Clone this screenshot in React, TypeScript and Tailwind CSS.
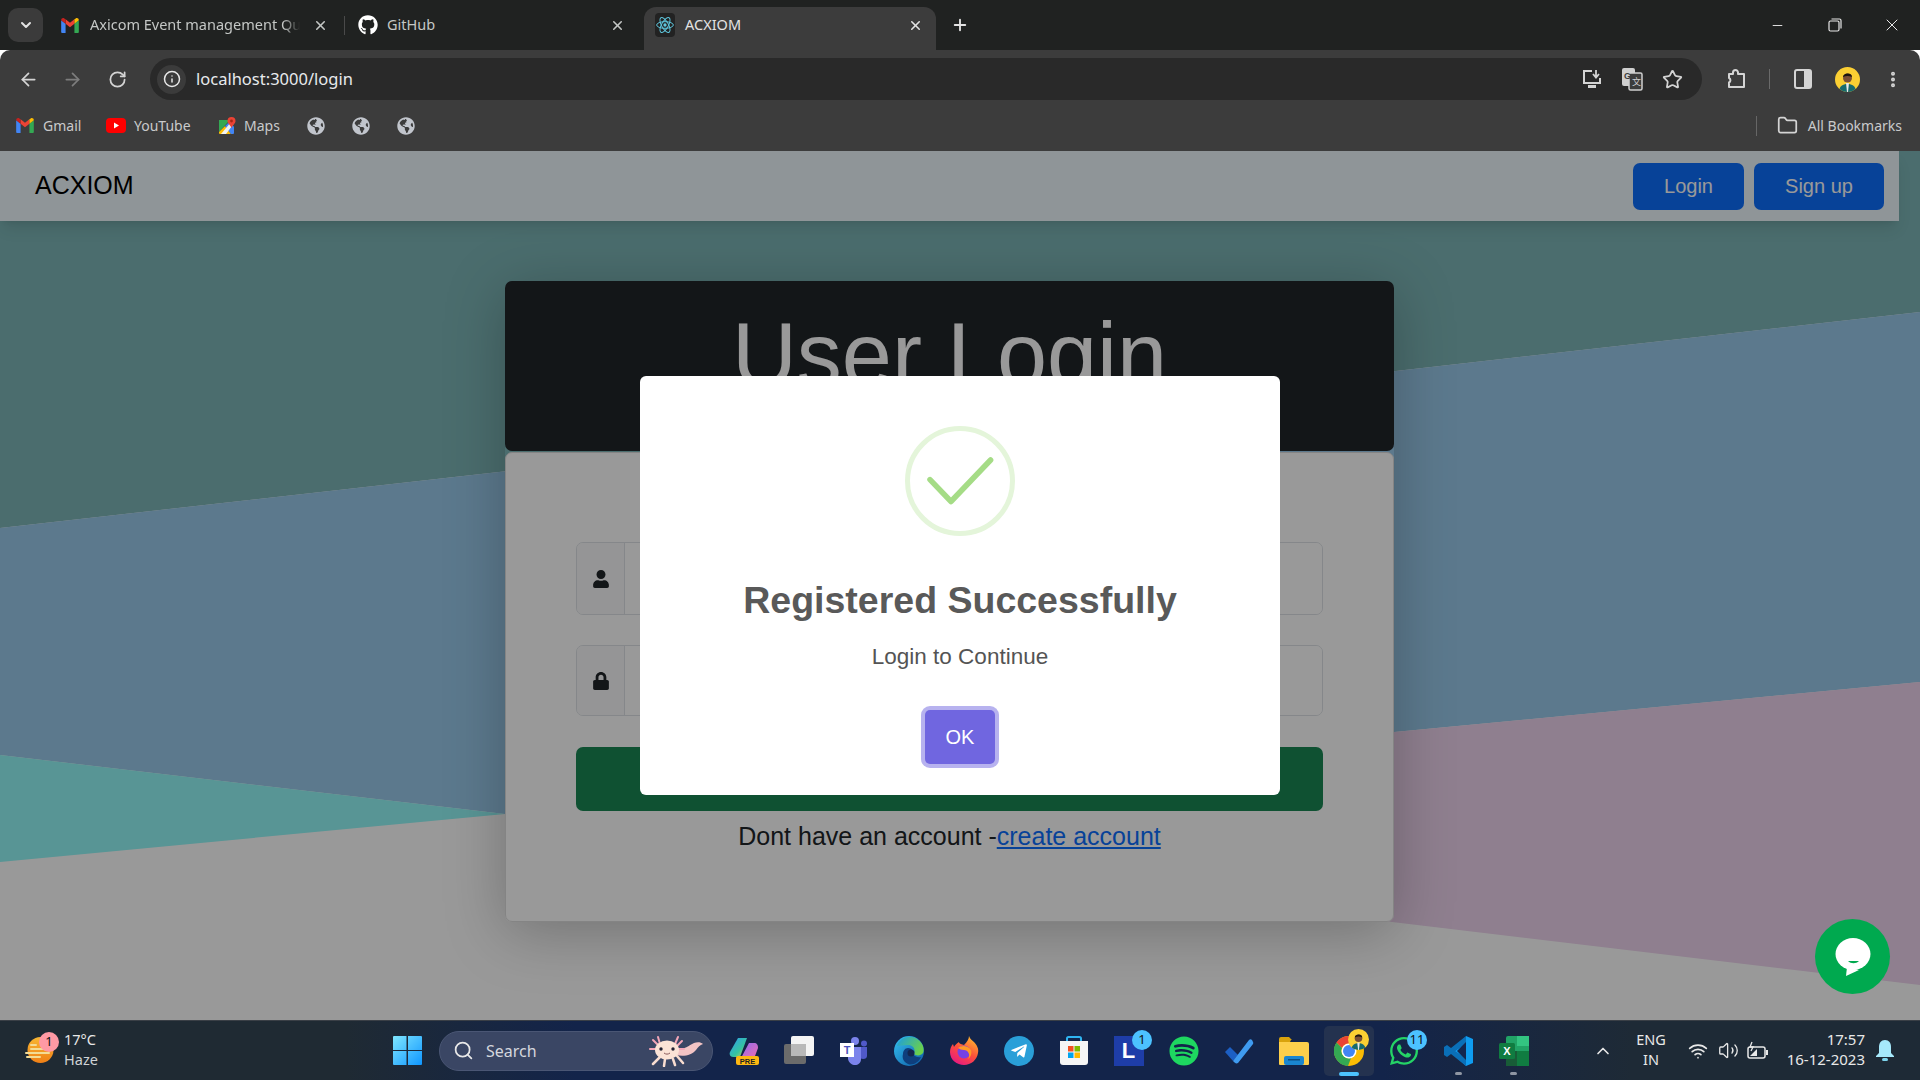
import type { ReactNode } from "react";
import {
  ArrowLeft,
  ArrowRight,
  ChevronDown,
  ChevronUp,
  EllipsisVertical,
  Folder,
  Info,
  Minus,
  Plus,
  RotateCw,
  Search,
  Star,
  Volume2,
  Wifi,
  X,
} from "lucide-react";
import {
  FaGithub,
  FaGlobeAmericas,
  FaLock,
  FaSpotify,
  FaTelegramPlane,
  FaUser,
  FaWhatsapp,
} from "react-icons/fa";

function GmailIcon() {
  return (
    <svg width={18} height={15} viewBox="2 3.500 20 17">
      <path d="M2 20V6l5 4v10.500H3a1 1 0 0 1-1-1z" fill="#4285f4" />
      <path d="M22 20V6l-5 4v10.500h4a1 1 0 0 0 1-1z" fill="#34a853" />
      <path d="M7 10v-5l5 4 5-4v5l-5 4z" fill="#ea4335" />
      <path d="M2 6c0-2 2-3 3.500-2L7 5v5L2 6z" fill="#c5221f" />
      <path d="M22 6c0-2-2-3-3.500-2L17 5v5l5-4z" fill="#fbbc04" />
    </svg>
  );
}

function ReactIcon() {
  return (
    <svg width={20} height={24} viewBox="0 0 24 24" className="bg-[#222] rounded-sm" fill="none" stroke="#5ec6dd" strokeWidth={1.2}>
      <circle cx={12} cy={12} r={2} fill="#5ec6dd" stroke="none" />
      <ellipse cx={12} cy={12} rx={10} ry={4} />
      <ellipse cx={12} cy={12} rx={10} ry={4} transform="rotate(60 12 12)" />
      <ellipse cx={12} cy={12} rx={10} ry={4} transform="rotate(120 12 12)" />
    </svg>
  );
}

function YoutubeIcon() {
  return (
    <svg width={20} height={15} viewBox="0 0 20 15">
      <rect width={20} height={15} rx={4} fill="#f00" />
      <path d="M8 4.500v6l5-3z" fill="#fff" />
    </svg>
  );
}

function MapsIcon() {
  return (
    <svg width={18} height={18} viewBox="0 0 18 18">
      <path d="M1 3h11L1 15z" fill="#34a853" />
      <path d="M1 15 7 9l6 8H2a1 1 0 0 1-1-1z" fill="#fbbc04" />
      <path d="M7 9l5-5 4 6v6a1 1 0 0 1-1 1h-2z" fill="#4285f4" />
      <path d="M3 17 13 5l4 0-9 12z" fill="#f1f3f4" />
      <path d="M13.500 0a4 4 0 0 1 4 4c0 2.500-3 4-4 7-1-3-4-4.500-4-7a4 4 0 0 1 4-4z" fill="#ea4335" />
      <circle cx={13.500} cy={4} r={1.400} fill="#a52714" />
    </svg>
  );
}

function InstallIcon() {
  return (
    <svg width={22} height={22} viewBox="0 0 22 22" fill="none" stroke="#d4d4d4" strokeWidth={2}>
      <path d="M11 3H3v12h16v-5" />
      <path d="M15 2v7m-3-3 3 3.500L18 6" strokeWidth={1.800} />
      <path d="M7 18.500h8" strokeWidth={3} />
    </svg>
  );
}

function TranslateIcon() {
  return (
    <svg width={22} height={24} viewBox="0 0 22 24">
      <rect x={1} y={1} width={13} height={18} rx={2} fill="#cfcfcf" />
      <rect x={8} y={6} width={13} height={17} rx={1.500} fill="#3c3c3c" stroke="#cfcfcf" strokeWidth={1.500} />
      <text x={3} y={12} fontSize={9} fontWeight={700} fill="#3c3c3c" fontFamily="Liberation Sans, sans-serif">G</text>
      <text x={11} y={18} fontSize={9} fill="#cfcfcf" fontFamily="Noto Sans CJK SC, sans-serif">文</text>
    </svg>
  );
}

function ExtensionIcon() {
  return (
    <svg width={22} height={22} viewBox="0 0 22 22" fill="none" stroke="#d4d4d4" strokeWidth={2} strokeLinejoin="round">
      <path d="M4 6h4V4.500a2.500 2.500 0 0 1 5 0V6h6v13H4v-4.500a2.500 2.500 0 0 0 0-4.500z" />
    </svg>
  );
}

function SidePanelIcon() {
  return (
    <svg width={18} height={20} viewBox="0 0 18 20">
      <rect x={1} y={1} width={16} height={18} rx={2} fill="none" stroke="#d4d4d4" strokeWidth={2} />
      <rect x={10} y={1} width={7} height={18} fill="#d4d4d4" />
    </svg>
  );
}

function RestoreIcon() {
  return (
    <svg width={14} height={14} viewBox="0 0 14 14" fill="none" stroke="#e8e8e8" strokeWidth={1.200}>
      <rect x={1} y={3} width={10} height={10} rx={1.500} />
      <path d="M3.500 1H11.500a1.500 1.500 0 0 1 1.500 1.500V10.500" />
    </svg>
  );
}

function Avatar({ size }: { size: number }) {
  return (
    <svg width={size} height={size} viewBox="0 0 25 25" className="rounded-full">
      <rect width={25} height={25} fill="#fbcf33" />
      <path d="M4 25c0-6 4-8 8.500-8S21 19 21 25z" fill="#176a6d" />
      <path d="M11 16h3l-1 9h-1z" fill="#e8e8e8" />
      <circle cx={12.500} cy={11} r={4.500} fill="#7a4f35" />
      <path d="M8 10c0-4 9-5 9 0-3-1.500-6-1.500-9 0z" fill="#1d1510" />
    </svg>
  );
}

function WeatherIcon() {
  return (
    <svg width={30} height={30} viewBox="0 0 30 30">
      <defs>
        <linearGradient id="sun" x1="0" y1="0" x2="0" y2="1">
          <stop offset="0" stopColor="#f7b733" />
          <stop offset="1" stopColor="#ef7f16" />
        </linearGradient>
      </defs>
      <circle cx={15.500} cy={14} r={13} fill="url(#sun)" />
      <g stroke="#f3dc96" strokeWidth={2} strokeLinecap="round">
        <path d="M6 9h5M6 13h17M1 17h23M2 21h13" />
      </g>
    </svg>
  );
}

function WindowsIcon() {
  return (
    <svg width={29} height={29} viewBox="0 0 29 29">
      <defs>
        <linearGradient id="win" x1="0" y1="0" x2="1" y2="1">
          <stop offset="0" stopColor="#7fe6ff" />
          <stop offset="1" stopColor="#0f96ff" />
        </linearGradient>
      </defs>
      <path d="M0 1a1 1 0 0 1 1-1h12.500v14H0zM15 0h13a1 1 0 0 1 1 1v13H15zM0 15h13.500v14H1a1 1 0 0 1-1-1zM15 15h14v13a1 1 0 0 1-1 1H15z" fill="url(#win)" />
    </svg>
  );
}

function Axolotl() {
  return (
    <svg width={56} height={32} viewBox="0 0 56 32">
      <path d="M28 14c6 2 12-3 18-6 3-1 7-1 9 1-3 1-5 3-7 6-4 5-12 7-20 5z" fill="#f2c4c4" />
      <g stroke="#f3a6b8" strokeWidth={2} strokeLinecap="round">
        <path d="M10 10 5 5M12 9l-2-7M27 9l3-7M29 11l5-5M9 14H2M30 14h6" />
      </g>
      <g stroke="#f9ddd0" strokeWidth={2.500} strokeLinecap="round">
        <path d="M12 22 5 29M17 24l-1 7M25 24l2 6M29 21l6 7" />
      </g>
      <ellipse cx={19} cy={15} rx={12} ry={9.500} fill="#fbe3d6" />
      <circle cx={13} cy={14} r={1.700} fill="#223" />
      <circle cx={25} cy={14} r={1.700} fill="#223" />
      <path d="M16 18c2 1.500 4 1.500 6 0" stroke="#8a5a5a" strokeWidth={1} fill="none" />
    </svg>
  );
}

function CopilotIcon() {
  return (
    <svg width={30} height={30} viewBox="0 0 30 30">
      <defs>
        <linearGradient id="cp1" x1="0" y1="0" x2="1" y2="1">
          <stop offset="0" stopColor="#2f9cf4" />
          <stop offset="0.6" stopColor="#35c4a0" />
          <stop offset="1" stopColor="#e8c93a" />
        </linearGradient>
        <linearGradient id="cp2" x1="0" y1="0" x2="1" y2="1">
          <stop offset="0" stopColor="#8b6cf0" />
          <stop offset="1" stopColor="#f06bb0" />
        </linearGradient>
      </defs>
      <path d="M9 2h9l-7 19H4c-3 0-4-3-3-5z" fill="url(#cp1)" />
      <path d="M20 7h5c3 0 4 2 4 5l-3 8c-1 2-3 2-5 2h-9z" fill="url(#cp2)" />
      <rect x={7} y={20} width={23} height={9} rx={2} fill="#fdb812" />
      <text x={18.500} y={27.500} textAnchor="middle" fontSize={7.500} fontWeight={700} fill="#222" fontFamily="Liberation Sans, sans-serif">PRE</text>
    </svg>
  );
}

function TaskViewIcon() {
  return (
    <svg width={30} height={30} viewBox="0 0 30 30">
      <rect x={0} y={8} width={22} height={20} rx={2} fill="#6b6b6b" />
      <rect x={7} y={0} width={23} height={20} rx={2} fill="#f4f4f4" />
      <rect x={7} y={8} width={15} height={12} fill="#b9b9b9" />
    </svg>
  );
}

function TeamsIcon() {
  return (
    <svg width={28} height={28} viewBox="0 0 28 28">
      <circle cx={15} cy={4} r={4} fill="#7b83eb" />
      <circle cx={24} cy={6.500} r={3} fill="#5059c9" />
      <path d="M19 10h8v9c0 3-4 4-7 2z" fill="#5059c9" />
      <path d="M8 10h13v12c0 4-3 6-6 6s-6-2-7-6z" fill="#7b83eb" />
      <rect x={0} y={6} width={14} height={14} fill="#fff" />
      <text x={7} y={17} textAnchor="middle" fontSize={11} fontWeight={700} fill="#4b53bc" fontFamily="Liberation Sans, sans-serif">T</text>
    </svg>
  );
}

function EdgeIcon() {
  return (
    <svg width={30} height={30} viewBox="0 0 30 30">
      <defs>
        <linearGradient id="edge1" x1="0" y1="0" x2="1" y2="1">
          <stop offset="0" stopColor="#35c1f1" />
          <stop offset="1" stopColor="#0c59a4" />
        </linearGradient>
        <linearGradient id="edge2" x1="0" y1="0" x2="1" y2="0.500">
          <stop offset="0" stopColor="#1b9de2" />
          <stop offset="1" stopColor="#6ad04c" />
        </linearGradient>
      </defs>
      <circle cx={15} cy={15} r={15} fill="url(#edge1)" />
      <path d="M3 10C6 1 16-1 23 3c5 3 8 9 6 14-2 3-7 3-9 1 2-5-1-9-6-9-5 0-8 1-11 1z" fill="url(#edge2)" />
      <path d="M14 12c4 0 5 3 5 5s3 5 8 4c-2 5-8 9-13 7-5-2-6-7-5-10 0-3 2-6 5-6z" fill="#0f3f7d" />
      <circle cx={17} cy={17} r={3.500} fill="#13264f" />
    </svg>
  );
}

function FirefoxIcon() {
  return (
    <svg width={30} height={30} viewBox="0 0 30 30">
      <defs>
        <linearGradient id="ff" x1="0.800" y1="0" x2="0.200" y2="1">
          <stop offset="0" stopColor="#ffbd2e" />
          <stop offset="0.500" stopColor="#ff4f3a" />
          <stop offset="1" stopColor="#e31587" />
        </linearGradient>
      </defs>
      <path d="M20 0c1 3 3 4 5 6 3 3 5 7 4 11-1 7-7 12-14 12S1 24 1 16c0-3 1-6 3-8l1 3c1-2 3-4 5-5 0 2 3 2 5 3 3-3 5-6 5-9z" fill="url(#ff)" />
      <circle cx={15} cy={16} r={6.500} fill="#7542e5" />
      <path d="M9 12c3-3 10-3 13 2 1 3 0 7-3 9 3-4 0-9-4-9-3 0-4-1-6-2z" fill="#ff9a25" />
    </svg>
  );
}

function StoreIcon() {
  return (
    <svg width={30} height={30} viewBox="0 0 30 30">
      <path d="M8 5V2.500A1.500 1.500 0 0 1 9.500 1h11A1.500 1.500 0 0 1 22 2.500V5" stroke="#2fb4f1" strokeWidth={2} fill="none" />
      <path d="M1 5h28v21a3 3 0 0 1-3 3H4a3 3 0 0 1-3-3z" fill="#f5f5f5" />
      <rect x={9} y={10} width={5.500} height={5.500} fill="#f25022" />
      <rect x={15.500} y={10} width={5.500} height={5.500} fill="#7fba00" />
      <rect x={9} y={16.500} width={5.500} height={5.500} fill="#00a4ef" />
      <rect x={15.500} y={16.500} width={5.500} height={5.500} fill="#ffb900" />
    </svg>
  );
}

function TodoIcon() {
  return (
    <svg width={30} height={26} viewBox="0 0 30 26">
      <path d="M1 14l5-5 8 8-5 6z" fill="#1c5fc4" />
      <path d="M9 23 25 2a2 2 0 0 1 3 0l1 2a2 2 0 0 1 0 2L14 25c-2 1-3 0-5-2z" fill="#3f9bf0" />
    </svg>
  );
}

function FilesIcon() {
  return (
    <svg width={30} height={28} viewBox="0 0 30 28">
      <path d="M0 2a2 2 0 0 1 2-2h8l3 3h-1l-1 2H0z" fill="#d9a30d" />
      <path d="M0 5h28a2 2 0 0 1 2 2v20a1 1 0 0 1-1 1H1a1 1 0 0 1-1-1z" fill="#fdcf4b" />
      <rect x={5} y={19} width={20} height={9} rx={2} fill="#1a86d0" />
      <rect x={9} y={22} width={12} height={1.500} fill="#0c4f82" />
    </svg>
  );
}

function ChromeIcon() {
  return (
    <svg width={30} height={30} viewBox="0 0 30 30">
      <circle cx={15} cy={15} r={15} fill="#fbbc04" />
      <path d="M15 0a15 15 0 0 1 13 7.500H15a7.500 7.500 0 0 0-7 4.500L2.500 6.500A15 15 0 0 1 15 0z" fill="#ea4335" />
      <path d="M2.500 6.500 8 12a7.500 7.500 0 0 0 9 10l-3 8A15 15 0 0 1 2.500 6.500z" fill="#34a853" />
      <circle cx={15} cy={15} r={7.500} fill="#fff" />
      <circle cx={15} cy={15} r={6} fill="#4285f4" />
    </svg>
  );
}

function VsCodeIcon() {
  return (
    <svg width={30} height={30} viewBox="0 0 30 30">
      <path d="M22 0 29 3v24l-7 3-14-13 14-11z" fill="#0f9cf0" />
      <path d="M22 0v8L11 15l11 7v8L7 18l-4 3-3-2v-8l3-2 4 3z" fill="#0a6fb8" />
      <path d="M22 6v18l-9-9z" fill="#13264f" />
    </svg>
  );
}

function ExcelIcon() {
  return (
    <svg width={30} height={30} viewBox="0 0 30 30">
      <rect x={7} y={0} width={23} height={30} rx={2} fill="#21a366" />
      <rect x={18} y={0} width={12} height={10} fill="#33c481" />
      <rect x={7} y={15} width={11} height={15} fill="#185c37" />
      <rect x={18} y={15} width={12} height={15} fill="#107c41" />
      <rect x={0} y={7} width={16} height={16} rx={1.500} fill="#107c41" />
      <text x={8} y={19} textAnchor="middle" fontSize={11} fontWeight={700} fill="#fff" fontFamily="Liberation Sans, sans-serif">X</text>
    </svg>
  );
}

function TabStrip() {
  return (
    <div className="flex h-[50px] bg-[#202221] text-[14.500px] font-['Noto_Sans',sans-serif]">
      <div className="ml-2 mt-2 w-[35px] h-[34px] rounded-[10px] bg-[#3b3b3b] flex items-center justify-center text-[#e3e3e3]">
        <ChevronDown size={16} strokeWidth={3} />
      </div>
      <div className="w-[7px]" />
      <div className="w-[294px] flex items-center pl-[11px] pr-4 text-[#c4c7c5]">
        <GmailIcon />
        <span className="ml-[11px] w-[210px] overflow-hidden whitespace-nowrap [mask-image:linear-gradient(90deg,#000_92%,transparent)]">Axicom Event management Que</span>
        <X size={15} strokeWidth={2.500} className="ml-auto" />
      </div>
      <div className="w-px h-[19px] mt-4 bg-[#4a4a4a]" />
      <div className="w-[299px] flex items-center pl-[13px] pr-[19px] text-[#c4c7c5]">
        <FaGithub size={20} className="text-white" />
        <span className="ml-[9px]">GitHub</span>
        <X size={15} strokeWidth={2.500} className="ml-auto" />
      </div>
      <div className="w-[292px] h-[43px] self-end rounded-t-[12px] bg-[#3c3c3c] flex items-center pl-[11px] pr-[13px] pb-[7px] text-[#e3e3e3]">
        <ReactIcon />
        <span className="ml-[10px]">ACXIOM</span>
        <X size={15} strokeWidth={2.500} className="ml-auto" />
      </div>
      <div className="ml-[14px] w-5 flex items-center justify-center text-[#e3e3e3]">
        <Plus size={18} strokeWidth={2.500} />
      </div>
      <div className="ml-auto flex items-center text-[#e8e8e8]">
        <div className="w-[57px] flex justify-center">
          <Minus size={15} strokeWidth={1.500} />
        </div>
        <div className="w-[57px] flex justify-center">
          <RestoreIcon />
        </div>
        <div className="w-[57px] flex justify-center">
          <X size={20} strokeWidth={1.200} />
        </div>
      </div>
    </div>
  );
}

function Toolbar() {
  return (
    <div className="flex items-end h-[50px] rounded-t-[10px] bg-[#3c3c3c] text-[#d4d4d4] pl-[6px]">
      <div className="w-[44px] h-[42px] flex items-center justify-center">
        <ArrowLeft size={21} strokeWidth={2} />
      </div>
      <div className="w-[45px] h-[42px] flex items-center justify-center text-[#7d7d7d]">
        <ArrowRight size={21} strokeWidth={2} />
      </div>
      <div className="w-[44px] h-[42px] flex items-center justify-center">
        <RotateCw size={19} strokeWidth={2.200} />
      </div>
      <div className="ml-[11px] w-[1552px] h-[42px] rounded-full bg-[#292929] flex items-center pl-[7px] pr-[10px]">
        <div className="w-[29px] h-[29px] rounded-full bg-[#3b3b3b] flex items-center justify-center text-[#e8e8e8]">
          <Info size={18} strokeWidth={2} />
        </div>
        <span className="ml-[10px] text-[16.500px] text-[#e8eaed] font-['Noto_Sans',sans-serif]">localhost:3000/login</span>
        <div className="ml-auto w-10 flex justify-center">
          <InstallIcon />
        </div>
        <div className="w-10 flex justify-center">
          <TranslateIcon />
        </div>
        <div className="w-10 flex justify-center">
          <Star size={21} strokeWidth={2} />
        </div>
      </div>
      <div className="w-[67px] h-[42px] flex items-center justify-center">
        <ExtensionIcon />
      </div>
      <div className="w-px h-5 mb-[11px] bg-[#6a6a6a]" />
      <div className="w-[65px] h-[42px] flex items-center justify-center">
        <SidePanelIcon />
      </div>
      <div className="w-[25px] h-[42px] flex items-center">
        <Avatar size={25} />
      </div>
      <div className="ml-[23px] w-5 h-[42px] flex items-center justify-center">
        <EllipsisVertical size={23} strokeWidth={2.800} />
      </div>
    </div>
  );
}

function Globe() {
  return (
    <div className="w-[45px] flex justify-center">
      <FaGlobeAmericas size={18} className="text-[#c1c5cc]" />
    </div>
  );
}

function Bookmarks() {
  return (
    <div className="flex items-center h-[51px] bg-[#3c3c3c] pl-4 pr-[18px] text-[14px] text-[#c9cacb] font-['Noto_Sans',sans-serif]">
      <div className="w-[90px] flex items-center gap-[9px]">
        <GmailIcon />
        <span>Gmail</span>
      </div>
      <div className="w-[112px] flex items-center gap-2">
        <YoutubeIcon />
        <span>YouTube</span>
      </div>
      <div className="w-[75px] flex items-center gap-2">
        <MapsIcon />
        <span>Maps</span>
      </div>
      <Globe />
      <Globe />
      <Globe />
      <div className="ml-auto w-px h-5 bg-[#666]" />
      <Folder size={21} strokeWidth={2} className="ml-5 text-[#d4d4d4]" />
      <span className="ml-[10px]">All Bookmarks</span>
    </div>
  );
}

function NavBar() {
  return (
    <nav className="relative w-[1899px] h-[70px] bg-[#eef8fd] shadow-lg flex items-center pl-[35px] pr-[15px] text-[25px] text-black">
      <span>ACXIOM</span>
      <button className="ml-auto w-[111px] h-[47px] rounded-[7px] bg-[#0d6efd] text-white text-[20px]">Login</button>
      <button className="ml-[10px] w-[130px] h-[47px] rounded-[7px] bg-[#0d6efd] text-white text-[20px]">Sign up</button>
    </nav>
  );
}

function Background() {
  return (
    <svg className="absolute inset-0 w-full h-full" viewBox="0 0 1920 869" preserveAspectRatio="none">
      <rect width={1920} height={869} fill="#fff" />
      <polygon points="0,0 1920,0 1920,161 0,377" fill="#7db6b7" />
      <polygon points="0,377 1920,161 1920,531 1394,581 505,663 0,604" fill="#99caeb" />
      <polygon points="0,604 505,663 0,711" fill="#93f8f8" />
      <polygon points="1920,531 1300,590 1300,760 1920,834" fill="#eed4ee" />
    </svg>
  );
}

function InputRow({ icon, height }: { icon: ReactNode; height: string }) {
  return (
    <div className={`flex rounded-[7px] border border-[#dee2e6] overflow-hidden ${height}`}>
      <div className="w-[48px] shrink-0 bg-[#f8f9fa] border-r border-[#dee2e6] flex items-center justify-center text-[#212529]">
        {icon}
      </div>
      <input className="flex-1 bg-white" />
    </div>
  );
}

function LoginCard() {
  return (
    <div className="relative w-[889px] ml-[505px] mt-[60px] shadow-[0_10px_60px_rgba(0,0,0,0.25)] rounded-[7px]">
      <div className="h-[170px] rounded-[7px] bg-[#212529] pt-5 text-center text-white text-[90px] leading-[1.2] overflow-hidden">
        User Login
      </div>
      <div className="mt-px h-[470px] rounded-[7px] border border-[#dddddd] bg-white px-[70px] pt-[89px]">
        <InputRow height="h-[73px]" icon={<FaUser size={18} />} />
        <div className="h-[30px]" />
        <InputRow height="h-[71px]" icon={<FaLock size={18} />} />
        <button className="block mt-[31px] w-full h-[64px] rounded-[7px] bg-[#198754]" />
        <p className="mt-[7px] text-center text-[25px] leading-[37px] text-[#212529]">
          Dont have an account -<a className="text-[#0d6efd] underline">create account</a>
        </p>
      </div>
    </div>
  );
}

function SuccessModal() {
  return (
    <div className="absolute inset-0 bg-black/40 flex items-center justify-center">
      <div className="w-[640px] h-[419px] rounded-[6px] bg-white flex flex-col items-center pt-[50px]">
        <svg width={110} height={110} viewBox="0 0 110 110" fill="none">
          <circle cx={55} cy={55} r={52.500} stroke="#e4f5da" strokeWidth={5} />
          <path d="M25 53.600 46 75.500 85.600 34" stroke="#a5dc86" strokeWidth={5.500} strokeLinecap="round" strokeLinejoin="round" />
        </svg>
        <h2 className="mt-[42px] text-[37.500px] leading-[45px] font-bold text-[#595959]">Registered Successfully</h2>
        <p className="mt-[20px] text-[22.500px] leading-[27px] text-[#545454]">Login to Continue</p>
        <button className="mt-[40px] w-[70px] h-[54px] rounded-[5px] bg-[#7066e0] text-white text-[20px] ring-4 ring-[#7066e0]/50">OK</button>
      </div>
    </div>
  );
}

function ChatButton() {
  return (
    <div className="absolute right-[30px] bottom-[26px] w-[75px] h-[75px] rounded-full bg-[#00a94f] flex items-center justify-center">
      <svg width={36} height={40} viewBox="0 0 36 40">
        <ellipse cx={18} cy={17} rx={17.500} ry={16} fill="#fff" />
        <path d="M12 30 11 39 24 33z" fill="#fff" />
        <path d="M13 24c3 3 8 3 11 0z" fill="#00a94f" />
      </svg>
    </div>
  );
}

function Slot({ children, badge, dot }: { children: ReactNode; badge?: string; dot?: boolean }) {
  return (
    <div className="relative w-[55px] h-full flex items-center justify-center">
      {children}
      {badge && (
        <span className="absolute top-[9px] left-[31px] w-5 h-5 rounded-full bg-[#4cc2ff] text-[#111] text-[13px] flex items-center justify-center">
          {badge}
        </span>
      )}
      {dot && <span className="absolute bottom-[5px] left-[24px] w-[7px] h-[3px] rounded-full bg-[#8f96a3]" />}
    </div>
  );
}

function Taskbar() {
  return (
    <footer className="flex items-center h-[60px] border-t border-[#3a3f46] bg-[linear-gradient(90deg,#1f2a33_0%,#1f2a33_18%,#13244a_30%,#13244a_72%,#1e2a36_85%,#1e2a36_100%)] text-[#e8e8e8] text-[15px] font-['Noto_Sans',sans-serif]">
      <div className="w-[393px] pl-[25px] flex items-center">
        <div className="relative">
          <WeatherIcon />
          <span className="absolute -top-[4px] left-[14px] w-5 h-5 rounded-full bg-[#ff99a4] text-[#111] text-[13px] flex items-center justify-center">1</span>
        </div>
        <div className="ml-[9px] pb-[3px] leading-[20px] text-[14.500px]">
          <div>17°C</div>
          <div className="text-[#cfd3d6]">Haze</div>
        </div>
      </div>
      <WindowsIcon />
      <div className="ml-[17px] w-[274px] h-[40px] rounded-full bg-[#3a4664] border border-[#4a5674] flex items-center pl-[13px] pr-2 overflow-hidden">
        <Search size={21} strokeWidth={2} className="text-[#e8e8e8]" />
        <span className="ml-3 text-[16px] text-[#d4d7dd]">Search</span>
        <div className="ml-auto">
          <Axolotl />
        </div>
      </div>
      <div className="ml-[3px] flex h-full">
        <Slot><CopilotIcon /></Slot>
        <Slot><TaskViewIcon /></Slot>
        <Slot><TeamsIcon /></Slot>
        <Slot><EdgeIcon /></Slot>
        <Slot><FirefoxIcon /></Slot>
        <Slot>
          <div className="w-[30px] h-[30px] rounded-full bg-[#2a9fd8] flex items-center justify-center text-white">
            <FaTelegramPlane size={18} />
          </div>
        </Slot>
        <Slot><StoreIcon /></Slot>
        <Slot badge="1">
          <div className="w-[30px] h-[30px] bg-[#1e3da8] flex items-center justify-center text-white text-[22px] font-bold font-['Liberation_Sans',sans-serif]">L</div>
        </Slot>
        <Slot>
          <FaSpotify size={30} className="text-[#1ed760]" />
        </Slot>
        <Slot><TodoIcon /></Slot>
        <Slot><FilesIcon /></Slot>
        <div className="relative w-[55px] h-full flex items-center justify-center">
          <div className="w-[50px] h-[50px] rounded-[5px] bg-[#24324f] flex items-center justify-center">
            <ChromeIcon />
          </div>
          <div className="absolute top-[8px] left-[27px]">
            <Avatar size={21} />
          </div>
          <span className="absolute bottom-[4px] left-[18px] w-5 h-[4px] rounded-full bg-[#4cc2ff]" />
        </div>
        <Slot badge="11">
          <FaWhatsapp size={32} className="text-[#25d366]" />
        </Slot>
        <Slot dot><VsCodeIcon /></Slot>
        <Slot dot><ExcelIcon /></Slot>
      </div>
      <div className="ml-[51px] w-[22px] flex justify-center">
        <ChevronUp size={20} strokeWidth={2} />
      </div>
      <div className="ml-[17px] w-10 pb-[3px] text-center leading-[20px] text-[14.500px]">
        <div>ENG</div>
        <div>IN</div>
      </div>
      <div className="ml-3 w-[30px] flex justify-center">
        <Wifi size={20} strokeWidth={2} />
      </div>
      <div className="w-[30px] flex justify-center">
        <Volume2 size={21} strokeWidth={1.500} />
      </div>
      <div className="w-[30px] flex justify-center">
        <svg width={22} height={20} viewBox="0 0 22 20" fill="none" stroke="#e8e8e8" strokeWidth={1.500}>
          <rect x={1} y={6} width={17} height={11} rx={2} />
          <path d="M20 9v5" strokeWidth={2} />
          <path d="M3 15l7-7v7z" fill="#e8e8e8" stroke="none" />
          <path d="M5 1 3 6h3L4 10" strokeWidth={1.300} />
        </svg>
      </div>
      <div className="w-[92px] pb-[3px] text-right leading-[20px]">
        <div>17:57</div>
        <div>16-12-2023</div>
      </div>
      <svg className="ml-[10px]" width={20} height={22} viewBox="0 0 20 22">
        <path d="M10 0c4 0 6 3 6 7v6l3 3v1H1v-1l3-3V7c0-4 2-7 6-7z" fill="#a6e9fb" />
        <rect x={7} y={18} width={6} height={3} rx={1.500} fill="#7fd6ee" />
      </svg>
    </footer>
  );
}

export default function App() {
  return (
    <div className="w-[1920px] h-[1080px] overflow-hidden flex flex-col font-['Liberation_Sans',Arial,sans-serif]">
      <TabStrip />
      <Toolbar />
      <Bookmarks />
      <div className="relative flex-1 overflow-hidden">
        <Background />
        <NavBar />
        <LoginCard />
        <SuccessModal />
        <ChatButton />
      </div>
      <Taskbar />
    </div>
  );
}
